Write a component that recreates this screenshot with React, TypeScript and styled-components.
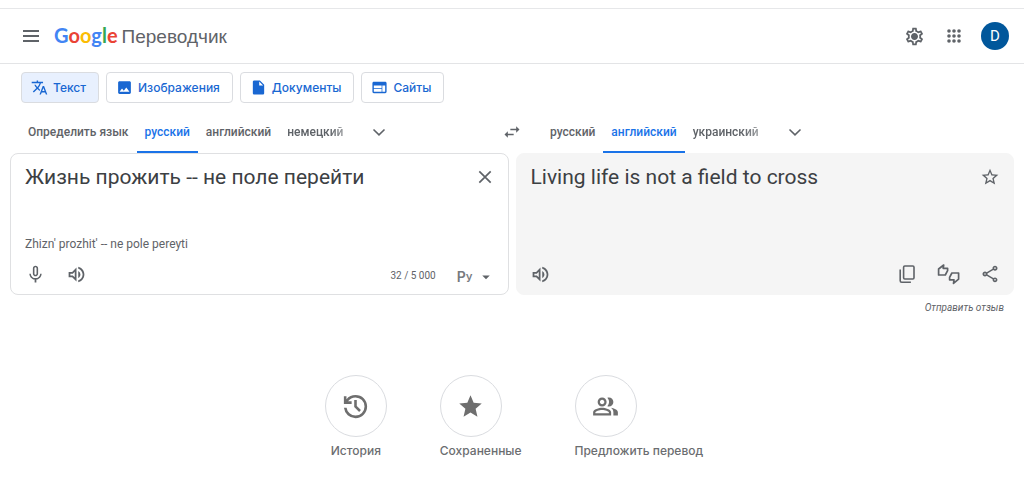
import React from 'react';
import styled, { createGlobalStyle, css } from 'styled-components';
import {
  MdTranslate,
  MdImage,
  MdInsertDriveFile,
  MdWeb,
  MdSwapHoriz,
  MdMicNone,
  MdOutlineSettings,
  MdOutlineVolumeUp,
  MdOutlineShare,
  MdStarOutline,
  MdStar,
  MdOutlinePeopleAlt,
  MdArrowDropDown,
} from 'react-icons/md';

const GlobalStyle = createGlobalStyle`
  *, *::before, *::after { box-sizing: border-box; }
  body {
    margin: 0;
    background: #fff;
    color: #5f6368;
    font-family: Roboto, "Liberation Sans", sans-serif;
  }
  button, textarea { font: inherit; color: inherit; }
  svg { display: block; flex: none; }
`;

const Page = styled.div`
  padding-top: 8px;
`;

const Header = styled.header`
  display: flex;
  align-items: center;
  height: 56px;
  padding: 0 15px 0 21px;
  border-top: 1px solid #e6e7e9;
  border-bottom: 1px solid #e3e4e6;
`;

const IconButton = styled.button`
  display: flex;
  align-items: center;
  justify-content: center;
  width: 20px;
  height: 20px;
  padding: 0;
  border: 0;
  background: none;
  color: #5f6368;
  cursor: pointer;
`;

const Brand = styled.a`
  display: flex;
  align-items: baseline;
  gap: 4px;
  margin-left: 13px;
  color: #5f6368;
  text-decoration: none;
`;

const Logo = styled.span`
  font: 700 20px/28px Lato, sans-serif;
`;

const Letter = styled.span<{ $color: string }>`
  color: ${(p) => p.$color};
`;

const Product = styled.span`
  font: 19px/28px "Liberation Sans", Arial, sans-serif;
`;

const HeaderTools = styled.div`
  display: flex;
  align-items: center;
  gap: 20px;
  margin-left: auto;
`;

const Avatar = styled.button`
  width: 28px;
  height: 28px;
  margin-left: -3px;
  padding: 0;
  border: 0;
  border-radius: 50%;
  background: #01579b;
  color: #fff;
  font-size: 15px;
  line-height: 28px;
`;

const Modes = styled.nav`
  display: flex;
  gap: 7px;
  padding: 8px 21px 7px;
`;

const ModeButton = styled.button<{ $active?: boolean }>`
  display: flex;
  align-items: center;
  gap: 5px;
  height: 31px;
  padding: 0 12px 0 9px;
  border: 1px solid #dadce0;
  border-radius: 4px;
  background: ${(p) => (p.$active ? '#e8f0fe' : '#fff')};
  color: #1967d2;
  font: 500 12px/16px Inter, sans-serif;
`;

const Languages = styled.div`
  display: grid;
  grid-template-columns: minmax(0, 1fr) 40px minmax(0, 1fr);
  align-items: center;
  padding: 0 10px;
`;

const TabList = styled.div`
  display: flex;
  align-items: center;
  padding-left: 10px;
`;

const Tab = styled.button<{ $active?: boolean; $fading?: boolean }>`
  height: 43px;
  padding: 2px 8px 0;
  border: 0;
  border-bottom: 2px solid ${(p) => (p.$active ? '#1a73e8' : 'transparent')};
  background: none;
  color: ${(p) => (p.$active ? '#1a73e8' : '#5f6368')};
  font-size: 12px;
  font-weight: 500;
  line-height: 16px;
  white-space: nowrap;
  ${(p) =>
    p.$fading &&
    css`
      mask-image: linear-gradient(to right, #000 70%, rgba(0, 0, 0, 0.4));
    `}
`;

const MoreButton = styled(IconButton)`
  margin-left: 18px;
`;

const SwapButton = styled(IconButton)`
  justify-self: center;
`;

const Panels = styled.main`
  display: grid;
  grid-template-columns: minmax(0, 1fr) minmax(0, 1fr);
  gap: 7px;
  padding: 0 10px;
`;

const Panel = styled.section<{ $result?: boolean }>`
  display: flex;
  flex-direction: column;
  min-height: 142px;
  padding: 9px 13px 8px 14px;
  border: 1px solid ${(p) => (p.$result ? '#f5f5f5' : '#dfe0e2')};
  border-radius: 8px;
  background: ${(p) => (p.$result ? '#f5f5f5' : '#fff')};
`;

const PanelTop = styled.div`
  display: flex;
  align-items: center;
`;

const sourceText = css`
  flex: 1;
  min-width: 0;
  margin: 0;
  color: #3c4043;
  font-size: 21px;
  line-height: 28px;
`;

const SourceInput = styled.textarea`
  ${sourceText}
  height: 28px;
  padding: 0;
  border: 0;
  outline: 0;
  background: none;
  resize: none;
  overflow: hidden;
`;

const Translation = styled.p`
  ${sourceText}
`;

const Translit = styled.p`
  margin: auto 0 0;
  font-size: 12px;
  line-height: 16px;
`;

const PanelTools = styled.div<{ $push?: boolean }>`
  display: flex;
  align-items: center;
  gap: 21px;
  height: 24px;
  margin-top: ${(p) => (p.$push ? 'auto' : '10px')};
`;

const Spacer = styled.span`
  flex: 1;
`;

const Counter = styled.span`
  padding-top: 4px;
  font-size: 10px;
  line-height: 16px;
`;

const KeyboardButton = styled.button`
  display: flex;
  align-items: center;
  gap: 4px;
  padding: 6px 0 0;
  border: 0;
  background: none;
`;

const KeyboardGlyph = styled.span`
  color: #777a7e;
  font: 600 14px/20px Inter, sans-serif;
`;

const SmallGlyph = styled.span`
  font-size: 10px;
`;

const Feedback = styled.footer`
  display: flex;
  justify-content: flex-end;
  padding: 6px 20px 0;
  font-size: 10px;
  font-style: italic;
  line-height: 14px;
`;

const FeedbackLink = styled.a`
  color: inherit;
  text-decoration: none;
`;

const Shortcuts = styled.nav`
  display: flex;
  justify-content: center;
  gap: 53px;
  padding: 60px 16px 24px 20px;
`;

const Shortcut = styled.button`
  display: flex;
  flex-direction: column;
  align-items: flex-start;
  gap: 6px;
  padding: 0;
  border: 0;
  background: none;
  color: #6b6d70;
  font: 500 12px/16px Inter, sans-serif;
`;

const Disc = styled.span`
  display: flex;
  align-items: center;
  justify-content: center;
  width: 62px;
  height: 62px;
  border: 1px solid #dadce0;
  border-radius: 50%;
  color: #6e6e6e;
`;

const ShortcutLabel = styled.span<{ $centered?: boolean }>`
  align-self: ${(p) => (p.$centered ? 'center' : 'flex-start')};
`;

const MenuIcon = () => (
  <svg width="24" height="24" viewBox="0 0 24 24" fill="currentColor" aria-hidden="true">
    <path d="M4 6h16v2H4zM4 11h16v2H4zM4 16h16v2H4z" />
  </svg>
);

const AppsIcon = () => (
  <svg width="24" height="24" viewBox="0 0 24 24" fill="currentColor" aria-hidden="true">
    {[7, 12, 17].map((y) => [7, 12, 17].map((x) => <circle key={`${x}-${y}`} cx={x} cy={y} r="1.8" />))}
  </svg>
);

const GearIcon = () => (
  <svg width="21" height="21" viewBox="0 0 24 24" fill="currentColor" aria-hidden="true">
    <MdOutlineSettings size={24} />
    <circle cx="12" cy="12" r="3" />
  </svg>
);

const ChevronIcon = () => (
  <svg width="24" height="24" viewBox="0 0 24 24" fill="none" stroke="currentColor" strokeWidth="1.6" aria-hidden="true">
    <path d="M6.5 9.5l5.5 5.3 5.5-5.3" />
  </svg>
);

const CloseIcon = () => (
  <svg width="24" height="24" viewBox="0 0 24 24" fill="none" stroke="currentColor" strokeWidth="1.7" aria-hidden="true">
    <path d="M6.3 6.3l11.4 11.4M17.7 6.3L6.3 17.7" />
  </svg>
);

const CopyIcon = () => (
  <svg width="24" height="24" viewBox="0 0 24 24" fill="none" stroke="currentColor" strokeWidth="1.6" aria-hidden="true">
    <rect x="7.6" y="4" width="10.4" height="13" rx="1.2" />
    <path d="M4.2 7.5v11.2q0 1.5 1.5 1.5h9.2" />
  </svg>
);

const RateIcon = () => (
  <svg width="24" height="24" viewBox="0 0 24 24" fill="none" stroke="currentColor" strokeWidth="1.7" strokeLinejoin="round" aria-hidden="true">
    <path d="M1.6 7v6h6.7l2.3-4.3V6.3H6.2l.5-3.3z" />
    <path d="M21.6 17.2v-6.2h-6.7l-2.3 4.4v2.4H17l-.5 3.6z" />
  </svg>
);

const HistoryIcon = () => (
  <svg width="31" height="31" viewBox="0 0 24 24" fill="currentColor" aria-hidden="true">
    <path d="M12 21q-3.45 0-6.0125-2.2875T3.05 13H5.1q.35 2.6 2.3125 4.3T12 19q2.925 0 4.9625-2.0375T19 12q0-2.925-2.0375-4.9625T12 5q-1.725 0-3.225.8T6.25 8H9v2H3V4h2v2.35q1.275-1.6 3.1125-2.475T12 3q1.875 0 3.5125.7125t2.85 1.925 1.925 2.85T21 12t-.7125 3.5125-1.925 2.85-2.85 1.925T12 21Zm2.8-4.8L11 12.4V7h2v4.6l3.2 3.2-1.4 1.4Z" />
  </svg>
);

export default function App() {
  return (
    <>
      <GlobalStyle />
      <Page>
        <Header>
          <IconButton aria-label="Главное меню"><MenuIcon /></IconButton>
          <Brand href="#">
            <Logo>
              <Letter $color="#4285f4">G</Letter>
              <Letter $color="#ea4335">o</Letter>
              <Letter $color="#fbbc04">o</Letter>
              <Letter $color="#4285f4">g</Letter>
              <Letter $color="#34a853">l</Letter>
              <Letter $color="#ea4335">e</Letter>
            </Logo>
            <Product>Переводчик</Product>
          </Brand>
          <HeaderTools>
            <IconButton aria-label="Настройки"><GearIcon /></IconButton>
            <IconButton aria-label="Приложения Google"><AppsIcon /></IconButton>
            <Avatar aria-label="Аккаунт">D</Avatar>
          </HeaderTools>
        </Header>

        <Modes aria-label="Режим перевода">
          <ModeButton $active><MdTranslate size={17} />Текст</ModeButton>
          <ModeButton><MdImage size={17} />Изображения</ModeButton>
          <ModeButton><MdInsertDriveFile size={17} />Документы</ModeButton>
          <ModeButton><MdWeb size={17} />Сайты</ModeButton>
        </Modes>

        <Languages>
          <TabList role="tablist" aria-label="Исходный язык">
            <Tab role="tab">Определить язык</Tab>
            <Tab role="tab" aria-selected="true" $active>русский</Tab>
            <Tab role="tab">английский</Tab>
            <Tab role="tab" $fading>немецкий</Tab>
            <MoreButton aria-label="Другие исходные языки"><ChevronIcon /></MoreButton>
          </TabList>
          <SwapButton aria-label="Поменять языки местами"><MdSwapHoriz size={20} /></SwapButton>
          <TabList role="tablist" aria-label="Язык перевода">
            <Tab role="tab">русский</Tab>
            <Tab role="tab" aria-selected="true" $active>английский</Tab>
            <Tab role="tab" $fading>украинский</Tab>
            <MoreButton aria-label="Другие языки перевода"><ChevronIcon /></MoreButton>
          </TabList>
        </Languages>

        <Panels>
          <Panel>
            <PanelTop>
              <SourceInput aria-label="Исходный текст" rows={1} spellCheck={false} defaultValue="Жизнь прожить -- не поле перейти" />
              <IconButton aria-label="Удалить исходный текст"><CloseIcon /></IconButton>
            </PanelTop>
            <Translit>Zhizn' prozhit' -- ne pole pereyti</Translit>
            <PanelTools>
              <IconButton aria-label="Голосовой ввод"><MdMicNone size={21} /></IconButton>
              <IconButton aria-label="Прослушать"><MdOutlineVolumeUp size={21} /></IconButton>
              <Spacer />
              <Counter>32 / 5 000</Counter>
              <KeyboardButton aria-label="Экранная клавиатура">
                <KeyboardGlyph>Р<SmallGlyph>У</SmallGlyph></KeyboardGlyph>
                <MdArrowDropDown size={18} />
              </KeyboardButton>
            </PanelTools>
          </Panel>
          <Panel $result>
            <PanelTop>
              <Translation>Living life is not a field to cross</Translation>
              <IconButton aria-label="Сохранить перевод"><MdStarOutline size={20} /></IconButton>
            </PanelTop>
            <PanelTools $push>
              <IconButton aria-label="Прослушать перевод"><MdOutlineVolumeUp size={21} /></IconButton>
              <Spacer />
              <IconButton aria-label="Копировать перевод"><CopyIcon /></IconButton>
              <IconButton aria-label="Оценить перевод"><RateIcon /></IconButton>
              <IconButton aria-label="Поделиться переводом"><MdOutlineShare size={20} /></IconButton>
            </PanelTools>
          </Panel>
        </Panels>

        <Feedback><FeedbackLink href="#">Отправить отзыв</FeedbackLink></Feedback>

        <Shortcuts aria-label="Разделы">
          <Shortcut>
            <Disc><HistoryIcon /></Disc>
            <ShortcutLabel $centered>История</ShortcutLabel>
          </Shortcut>
          <Shortcut>
            <Disc><MdStar size={27} /></Disc>
            <ShortcutLabel>Сохраненные</ShortcutLabel>
          </Shortcut>
          <Shortcut>
            <Disc><MdOutlinePeopleAlt size={27} /></Disc>
            <ShortcutLabel>Предложить перевод</ShortcutLabel>
          </Shortcut>
        </Shortcuts>
      </Page>
    </>
  );
}
